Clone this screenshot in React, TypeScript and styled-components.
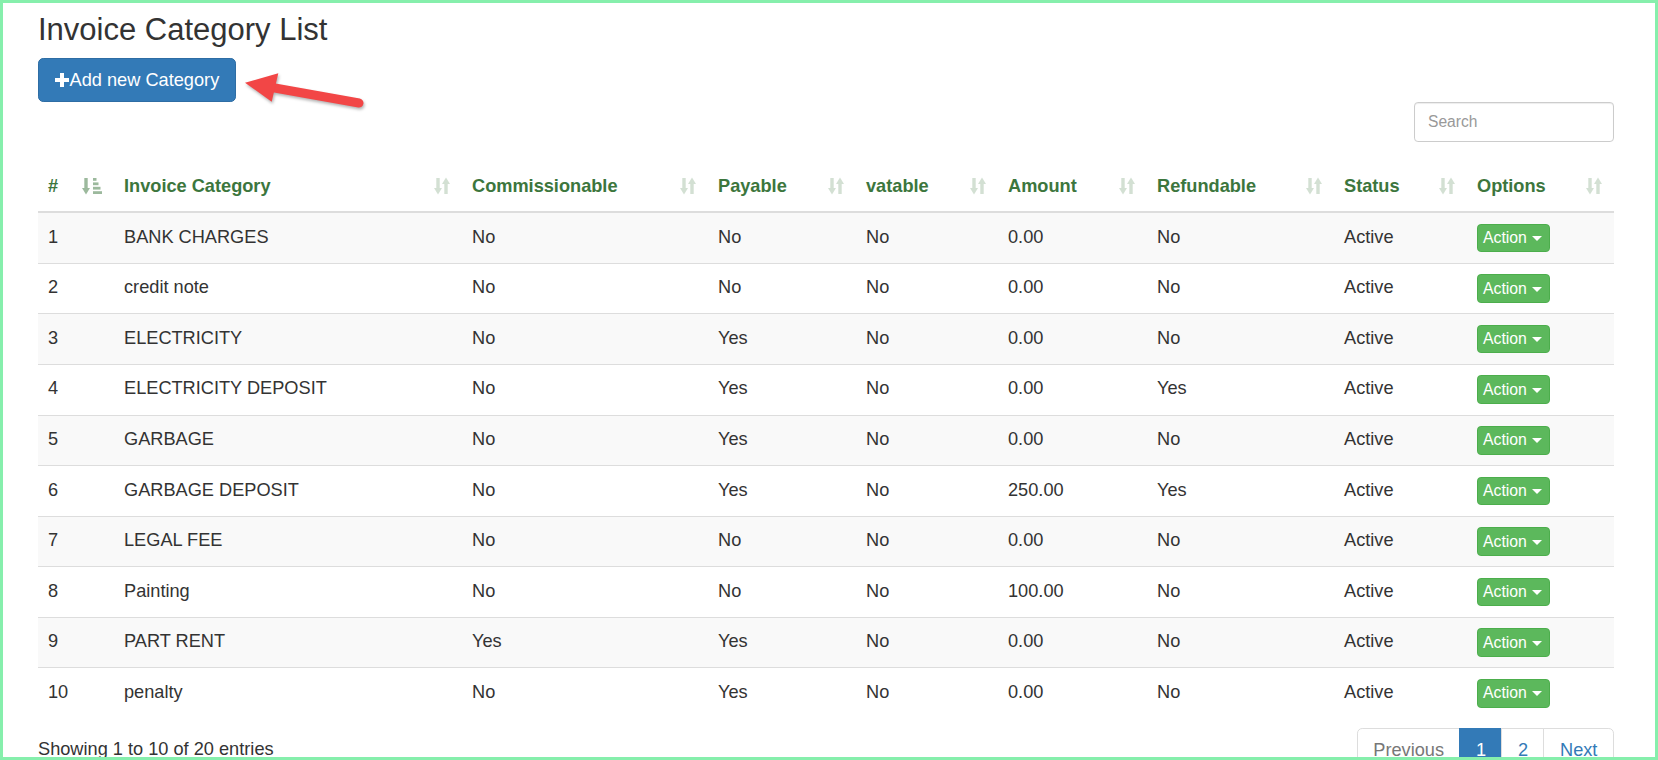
import React from "react";
import styled, { createGlobalStyle } from "styled-components";

const GlobalStyle = createGlobalStyle`
  html, body { margin: 0; padding: 0; overflow: hidden; background: #fff; }
  body { font-family: "Liberation Sans", Arial, Helvetica, sans-serif; color: #333; }
  *, *::before, *::after { box-sizing: border-box; }
  input::placeholder { color: #999; opacity: 1; }
`;

const Frame = styled.div`
  position: relative;
  width: 1658px;
  height: 760px;
  border: 3px solid #86efac;
  overflow: hidden;
  padding: 10.3px 41px 0 35px;
  background: #fff;
`;

const Title = styled.h3`
  margin: 0;
  font-size: 31px;
  line-height: 34.1px;
  font-weight: 400;
  color: #333;
`;

const ButtonRow = styled.div`
  display: flex;
  margin-top: 10.6px;
`;

const AddButton = styled.button`
  display: inline-flex;
  align-items: center;
  height: 44.2px;
  padding: 0 15.6px;
  font-family: inherit;
  font-size: 18.2px;
  line-height: 26px;
  color: #fff;
  background: #337ab7;
  border: 1.3px solid #2e6da4;
  border-radius: 5.2px;
  cursor: pointer;
`;

const PlusSvg = styled.svg`
  margin-right: 1px;
  flex: none;
`;

const SearchRow = styled.div`
  display: flex;
  justify-content: flex-end;
`;

const SearchInput = styled.input`
  width: 200px;
  height: 39.4px;
  padding: 6.5px 13px;
  font-family: inherit;
  font-size: 15.6px;
  color: #555;
  border: 1.3px solid #ccc;
  border-radius: 3.9px;
  box-shadow: inset 0 1px 1px rgba(0, 0, 0, 0.075);
  outline: none;
`;

const Table = styled.table`
  margin-top: 21.2px;
  width: 100%;
  table-layout: fixed;
  border-collapse: separate;
  border-spacing: 0;
`;

const Th = styled.th`
  text-align: left;
  font-weight: 700;
  color: #3c763d;
  font-size: 18.2px;
  line-height: 26px;
  padding: 10.4px 12px 12px 10px;
  border-bottom: 2.6px solid #ddd;
  vertical-align: bottom;
`;

const HeadInner = styled.div`
  display: flex;
  align-items: center;
  justify-content: space-between;
  white-space: nowrap;
`;

const SortIcon = styled.svg<{ $active?: boolean }>`
  flex: none;
  fill: #3c763d;
  opacity: ${(p) => (p.$active ? 0.5 : 0.22)};
`;

const Tr = styled.tr`
  &:nth-child(odd) { background: #f9f9f9; }
  &:first-child td { border-top: none; }
`;

const Td = styled.td`
  padding: 10.5px 10px;
  font-size: 18.2px;
  line-height: 26px;
  color: #333;
  vertical-align: top;
  border-top: 1px solid #ddd;
  white-space: nowrap;
`;

const ActionButton = styled.button`
  display: flex;
  align-items: center;
  gap: 5px;
  width: max-content;
  height: 28.6px;
  padding: 0 7px 0 5px;
  font-family: inherit;
  font-size: 15.8px;
  color: #fff;
  background: #5cb85c;
  border: 1.3px solid #4cae4c;
  border-radius: 3.9px;
  cursor: pointer;
`;

const Caret = styled.span`
  width: 0;
  height: 0;
  margin-top: 1px;
  border-top: 5.5px solid #fff;
  border-left: 5px solid transparent;
  border-right: 5px solid transparent;
`;

const Footer = styled.div`
  display: flex;
  justify-content: space-between;
  align-items: flex-start;
  margin-top: 10.4px;
`;

const Info = styled.div`
  padding-top: 8px;
  font-size: 18.2px;
  line-height: 26px;
  color: #333;
`;

const Pagination = styled.ul`
  display: flex;
  margin: 0;
  padding: 0;
  list-style: none;
`;

const PageLink = styled.li<{ $active?: boolean; $disabled?: boolean }>`
  padding: 7.8px 15.6px;
  margin-left: -1.3px;
  font-size: 18.2px;
  line-height: 26px;
  border: 1.3px solid ${(p) => (p.$active ? "#337ab7" : "#ddd")};
  background: ${(p) => (p.$active ? "#337ab7" : "#fff")};
  color: ${(p) => (p.$active ? "#fff" : p.$disabled ? "#777" : "#337ab7")};
  &:first-child { margin-left: 0; border-radius: 5.2px 0 0 5.2px; }
  &:last-child { border-radius: 0 5.2px 5.2px 0; }
`;

const ArrowSvg = styled.svg`
  position: absolute;
  left: 232px;
  top: 59px;
  overflow: visible;
  filter: drop-shadow(1px 2px 1.5px rgba(0, 0, 0, 0.3));
`;

const SortBoth = () => (
  <SortIcon width="16" height="18" viewBox="0 0 16 18">
    <rect x="2.3" y="1" width="3.4" height="11" />
    <polygon points="0,11 8,11 4,17.5" />
    <polygon points="8,7 16,7 12,0.5" />
    <rect x="10.3" y="6" width="3.4" height="11" />
  </SortIcon>
);

const SortAsc = () => (
  <SortIcon $active width="20" height="18" viewBox="0 0 20 18">
    <rect x="2.3" y="1" width="3.4" height="11" />
    <polygon points="0,11 8,11 4,17.5" />
    <rect x="11" y="1" width="3.5" height="2.8" />
    <rect x="11" y="5.4" width="5.5" height="2.8" />
    <rect x="11" y="9.8" width="7.5" height="2.8" />
    <rect x="11" y="14.2" width="9" height="2.8" />
  </SortIcon>
);

const columns = [
  { label: "#", width: 76 },
  { label: "Invoice Category", width: 348 },
  { label: "Commissionable", width: 246 },
  { label: "Payable", width: 148 },
  { label: "vatable", width: 142 },
  { label: "Amount", width: 149 },
  { label: "Refundable", width: 187 },
  { label: "Status", width: 133 },
  { label: "Options", width: 147 },
];

const rows: [string, string, string, string, string, string][] = [
  ["BANK CHARGES", "No", "No", "No", "0.00", "No"],
  ["credit note", "No", "No", "No", "0.00", "No"],
  ["ELECTRICITY", "No", "Yes", "No", "0.00", "No"],
  ["ELECTRICITY DEPOSIT", "No", "Yes", "No", "0.00", "Yes"],
  ["GARBAGE", "No", "Yes", "No", "0.00", "No"],
  ["GARBAGE DEPOSIT", "No", "Yes", "No", "250.00", "Yes"],
  ["LEGAL FEE", "No", "No", "No", "0.00", "No"],
  ["Painting", "No", "No", "No", "100.00", "No"],
  ["PART RENT", "Yes", "Yes", "No", "0.00", "No"],
  ["penalty", "No", "Yes", "No", "0.00", "No"],
];

export default function App() {
  return (
    <>
      <GlobalStyle />
      <Frame>
        <Title>Invoice Category List</Title>
        <ButtonRow>
          <AddButton>
            <PlusSvg width="14" height="14" viewBox="0 0 14 14" fill="#fff">
              <rect x="0" y="5" width="14" height="4" />
              <rect x="5" y="0" width="4" height="14" />
            </PlusSvg>
            Add new Category
          </AddButton>
        </ButtonRow>
        <SearchRow>
          <SearchInput placeholder="Search" />
        </SearchRow>
        <Table>
          <colgroup>
            {columns.map((c) => (
              <col key={c.label} style={{ width: c.width }} />
            ))}
          </colgroup>
          <thead>
            <tr>
              {columns.map((c, i) => (
                <Th key={c.label}>
                  <HeadInner>
                    <span>{c.label}</span>
                    {i === 0 ? <SortAsc /> : <SortBoth />}
                  </HeadInner>
                </Th>
              ))}
            </tr>
          </thead>
          <tbody>
            {rows.map((r, i) => (
              <Tr key={i}>
                <Td>{i + 1}</Td>
                {r.map((v, j) => (
                  <Td key={j}>{v}</Td>
                ))}
                <Td>Active</Td>
                <Td>
                  <ActionButton>
                    Action
                    <Caret />
                  </ActionButton>
                </Td>
              </Tr>
            ))}
          </tbody>
        </Table>
        <Footer>
          <Info>Showing 1 to 10 of 20 entries</Info>
          <Pagination>
            <PageLink $disabled>Previous</PageLink>
            <PageLink $active>1</PageLink>
            <PageLink>2</PageLink>
            <PageLink>Next</PageLink>
          </Pagination>
        </Footer>
        <ArrowSvg width="140" height="55" viewBox="235 62 140 55">
          <line x1="272" y1="87.5" x2="359" y2="103" stroke="#f24646" strokeWidth="9" strokeLinecap="round" />
          <polygon points="245,82.7 278.3,73.3 275,87.5 271.7,101.7" fill="#f24646" />
        </ArrowSvg>
      </Frame>
    </>
  );
}
